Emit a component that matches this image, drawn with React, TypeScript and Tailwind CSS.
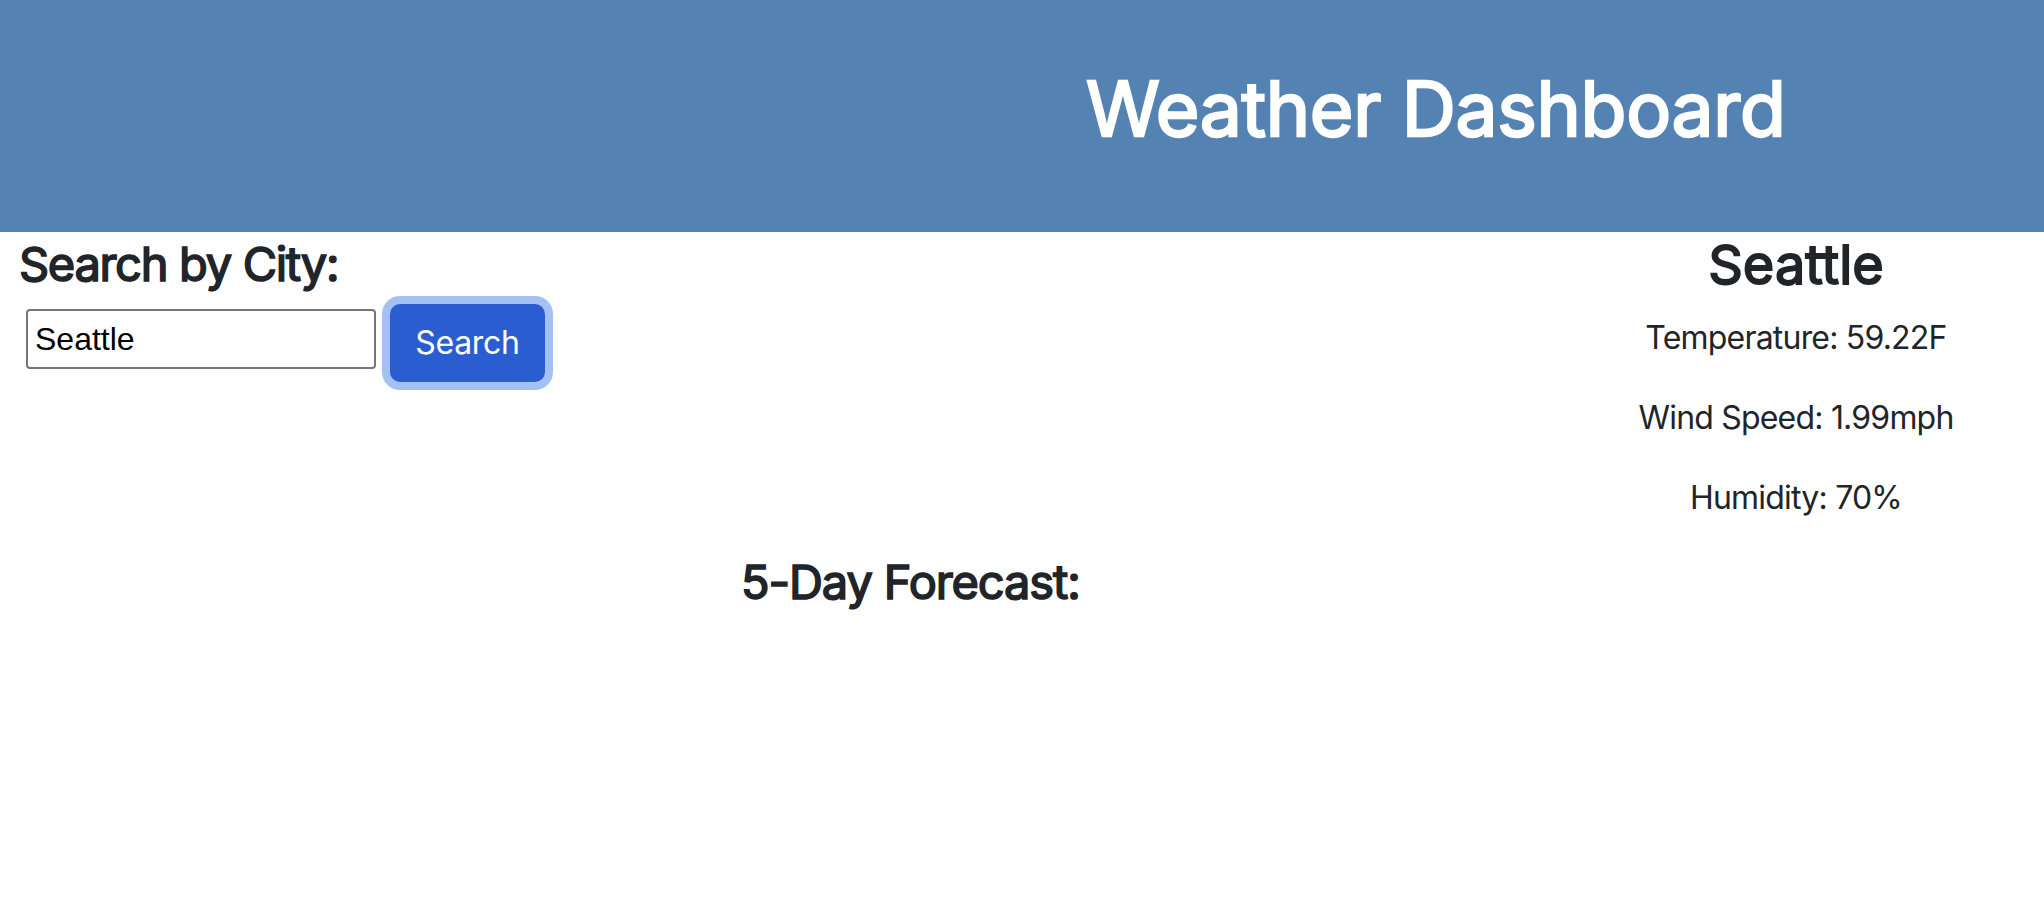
import React from "react";

export default function App() {
  const sans = { fontFamily: "Inter, 'Noto Sans', sans-serif" };
  return (
    <div className="w-[2044px] min-h-[904px] bg-white text-[#212529]" style={sans}>
      <header className="h-[232px] bg-[#5482b3] pt-[64px]">
        <h1 className="ml-[1086px] text-[75px] leading-[1.2] font-normal tracking-[-0.35px] text-white [-webkit-text-stroke-width:2.4px]">
          Weather Dashboard
        </h1>
      </header>
      <div className="flex">
        <div className="flex-1 pl-[19px]">
          <h4 className="mt-[4px] text-[47px] leading-[1.2] font-normal tracking-[-1.3px] [-webkit-text-stroke-width:1.6px]">
            Search by City:
          </h4>
          <form className="mt-[12px] ml-[7px] flex items-start gap-[14px]" onSubmit={(e) => e.preventDefault()}>
            <input
              defaultValue="Seattle"
              className="mt-[5px] h-[60px] w-[350px] rounded-[4px] border-2 border-[#767676] px-[7px] text-[32px] text-black outline-none"
              style={{ fontFamily: "'Liberation Sans', Arial, sans-serif" }}
            />
            <button
              type="submit"
              className="h-[78px] w-[155px] rounded-[10px] bg-[#2a5dd0] text-[32px] tracking-[-0.3px] text-white shadow-[0_0_0_8px_#a4c1f6]"
            >
              Search
            </button>
          </form>
        </div>
        <div className="w-[496px] text-center">
          <h3 className="mt-[1px] text-[54px] leading-[1.2] font-normal [-webkit-text-stroke-width:1.8px]">Seattle</h3>
          <p className="mt-[16px] mb-[32px] text-[32px] leading-[48px] tracking-[-0.8px]">Temperature: 59.22F</p>
          <p className="mb-[32px] text-[32px] leading-[48px] tracking-[-0.8px]">Wind Speed: 1.99mph</p>
          <p className="mb-[32px] text-[32px] leading-[48px] tracking-[-0.8px]">Humidity: 70%</p>
        </div>
      </div>
      <h4 className="ml-[741px] text-[47px] leading-[1.2] font-normal tracking-[-1.1px] [-webkit-text-stroke-width:1.6px]">
        5-Day Forecast:
      </h4>
    </div>
  );
}
